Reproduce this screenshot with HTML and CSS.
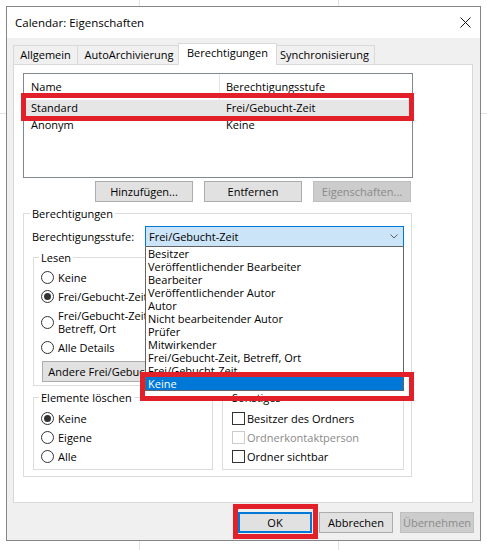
FILE: index.html
```html
<!DOCTYPE html>
<html lang="de">
<head>
  <meta charset="UTF-8">
  <title>Calendar: Eigenschaften</title>
  <link rel="stylesheet" href="styles.css">
</head>
<body>

<div class="fenster">
  <div class="titelleiste">
    <span class="titel">Calendar: Eigenschaften</span>
    <svg class="schliessen" width="11" height="11" viewBox="0 0 11 11">
      <path d="M0.5 0.5 L10.5 10.5 M10.5 0.5 L0.5 10.5" stroke="#111" stroke-width="1" fill="none"/>
    </svg>
  </div>

  <div class="inhalt">
    <!-- Reiter -->
    <div class="reiter">
      <div class="tab tab-allgemein">Allgemein</div>
      <div class="tab tab-archiv">AutoArchivierung</div>
      <div class="tab tab-rechte aktiv">Berechtigungen</div>
      <div class="tab tab-sync">Synchronisierung</div>
    </div>

    <div class="karte">
      <div class="liste">
        <div class="liste-kopf">
          <div class="spalte-name">Name</div>
          <div class="spalte-stufe">Berechtigungsstufe</div>
        </div>
        <div class="zeile markiert">
          <div class="spalte-name">Standard</div>
          <div class="spalte-stufe">Frei/Gebucht-Zeit</div>
        </div>
        <div class="zeile">
          <div class="spalte-name">Anonym</div>
          <div class="spalte-stufe">Keine</div>
        </div>
      </div>

      <div class="listen-knoepfe">
        <button class="knopf">Hinzufügen...</button>
        <button class="knopf">Entfernen</button>
        <button class="knopf" disabled>Eigenschaften...</button>
      </div>

      <fieldset class="gruppe gruppe-haupt">
        <legend>Berechtigungen</legend>

        <div class="stufe-zeile">
          <span class="stufe-label">Berechtigungsstufe:</span>
          <div class="auswahl">
            <span>Frei/Gebucht-Zeit</span>
            <svg class="pfeil" width="8" height="5" viewBox="0 0 8 5">
              <path d="M0.5 0.5 L4 4 L7.5 0.5" stroke="#606060" stroke-width="1" fill="none"/>
            </svg>
            <div class="aufklapp">
              <div class="eintrag">Besitzer</div>
              <div class="eintrag">Veröffentlichender Bearbeiter</div>
              <div class="eintrag">Bearbeiter</div>
              <div class="eintrag">Veröffentlichender Autor</div>
              <div class="eintrag">Autor</div>
              <div class="eintrag">Nicht bearbeitender Autor</div>
              <div class="eintrag">Prüfer</div>
              <div class="eintrag">Mitwirkender</div>
              <div class="eintrag">Frei/Gebucht-Zeit, Betreff, Ort</div>
              <div class="eintrag">Frei/Gebucht-Zeit</div>
              <div class="eintrag gewaehlt">Keine</div>
            </div>
          </div>
        </div>

        <div class="spalten">
          <fieldset class="gruppe gruppe-lesen">
            <legend>Lesen</legend>
            <div class="optionen">
              <div class="option"><span class="kreis"></span>Keine</div>
              <div class="option"><span class="kreis an"></span>Frei/Gebucht-Zeit</div>
              <div class="option"><span class="kreis"></span>Frei/Gebucht-Zeit,<br>Betreff, Ort</div>
              <div class="option"><span class="kreis"></span>Alle Details</div>
            </div>
            <button class="knopf knopf-andere">Andere Frei/Gebucht-Zeit...</button>
          </fieldset>

          <!-- Schreiben: liegt komplett unter der Aufklappliste -->
          <div class="gruppe-verdeckt"></div>

          <fieldset class="gruppe gruppe-links">
            <legend>Elemente löschen</legend>
            <div class="optionen">
              <div class="option"><span class="kreis an"></span>Keine</div>
              <div class="option"><span class="kreis"></span>Eigene</div>
              <div class="option"><span class="kreis"></span>Alle</div>
            </div>
          </fieldset>

          <fieldset class="gruppe gruppe-rechts">
            <legend>Sonstiges</legend>
            <div class="optionen">
              <div class="option"><span class="kasten"></span>Besitzer des Ordners</div>
              <div class="option inaktiv"><span class="kasten"></span>Ordnerkontaktperson</div>
              <div class="option"><span class="kasten"></span>Ordner sichtbar</div>
            </div>
          </fieldset>
        </div>
      </fieldset>
    </div>

    <div class="fuss">
      <button class="knopf knopf-fuss standard">OK</button>
      <button class="knopf knopf-fuss">Abbrechen</button>
      <button class="knopf knopf-fuss" disabled>Übernehmen</button>
    </div>
  </div>
</div>

<!-- rote Markierungen -->
<div class="markierung mark-standard"></div>
<div class="markierung mark-keine"></div>
<div class="markierung mark-ok"></div>

</body>
</html>
```

FILE: styles.css
```css
html {
  background: #fff;
}

body {
  margin: 0;
  padding: 6px 0 0 6px;
  position: relative;
  min-height: 550px;
  box-sizing: border-box;
  color: #000;
  font-family: 'Open Sans', 'Noto Sans', sans-serif;
  font-size: 11px;
  line-height: 13px;
  background:
    linear-gradient(#e2e2e2, #e2e2e2) 139px 0 / 1px 100% no-repeat,
    linear-gradient(#e2e2e2, #e2e2e2) 338px 0 / 1px 100% no-repeat,
    linear-gradient(#e2e2e2, #e2e2e2) 0 113px / 100% 1px no-repeat,
    #fff;
}

.fenster {
  width: 475px;
  height: 535px;
  box-sizing: border-box;
  border: 1px solid #858585;
  background-color: #f0f0f0;
  display: flex;
  flex-direction: column;
}

.titelleiste {
  height: 31px;
  box-sizing: border-box;
  flex: none;
  background-color: #fff;
  display: flex;
  align-items: center;
  justify-content: space-between;
  padding: 0 9px 0 8px;
}

.titel {
  font-size: 11.5px;
}

.inhalt {
  flex: 1;
  padding: 7px 6px 7px 6px;
  display: flex;
  flex-direction: column;
}

/* Reiter */
.reiter {
  display: flex;
  align-items: flex-end;
  height: 19px;
  flex: none;
}

.tab {
  height: 19px;
  box-sizing: border-box;
  border: 1px solid #d9d9d9;
  border-bottom: none;
  margin-left: -1px;
  text-align: center;
  line-height: 18px;
  background-color: #f0f0f0;
}

.tab-allgemein { width: 65px; margin-left: 0; }
.tab-archiv { width: 104px; }
.tab-rechte { width: 95px; }
.tab-sync { width: 101px; }

.tab.aktiv {
  width: 99px;
  height: 22px;
  margin: 0 -2px -1px -3px;
  line-height: 18px;
  padding-bottom: 3px;
  background-color: #fff;
  position: relative;
  z-index: 2;
}

.karte {
  height: 439px;
  flex: none;
  box-sizing: border-box;
  margin-right: 1px;
  background-color: #fff;
  border: 1px solid #d9d9d9;
  padding: 8px 0 0 9px;
}

/* Liste */
.liste {
  width: 390px;
  height: 105px;
  box-sizing: border-box;
  border: 1px solid #828790;
  background-color: #fff;
}

.liste-kopf {
  display: flex;
  height: 26px;
  line-height: 25px;
}

.liste-kopf .spalte-name {
  border-right: 1px solid #e5e5e5;
}

.zeile {
  display: flex;
  height: 17px;
  line-height: 16px;
}

.zeile.markiert {
  background-color: #e6e6e6;
}

.spalte-name {
  width: 196px;
  box-sizing: border-box;
  padding-left: 7px;
}

.spalte-stufe {
  flex: 1;
  padding-left: 6px;
}

/* Knoepfe */
.knopf {
  height: 21px;
  box-sizing: border-box;
  padding: 0;
  border: 1px solid #adadad;
  background-color: #e1e1e1;
  font-family: inherit;
  font-size: 11px;
  line-height: 18px;
  color: #000;
}

.knopf:disabled {
  background-color: #cccccc;
  border-color: #bfbfbf;
  color: #8a8a8a;
}

.listen-knoepfe {
  width: 390px;
  box-sizing: border-box;
  display: flex;
  justify-content: flex-end;
  gap: 11px;
  padding-right: 2px;
  margin-top: 3px;
}

.listen-knoepfe .knopf {
  width: 98px;
}

/* Gruppen */
.gruppe {
  margin: 0;
  min-width: 0;
  border: 1px solid #dcdcdc;
}

.gruppe legend {
  padding: 0 2px;
  margin-left: -2px;
  line-height: 13px;
}

.gruppe-haupt {
  width: 389px;
  box-sizing: border-box;
  margin-top: 5px;
  padding: 6px 7px 6px 8px;
}

.stufe-zeile {
  display: flex;
  align-items: center;
  height: 21px;
}

.stufe-label {
  width: 113px;
  flex: none;
}

.auswahl {
  position: relative;
  width: 259px;
  height: 21px;
  box-sizing: border-box;
  border: 1px solid #0078d7;
  background-color: #cce4f7;
  display: flex;
  align-items: center;
  padding-left: 3px;
}

.pfeil {
  margin-left: auto;
  margin-right: 5px;
}

.aufklapp {
  position: absolute;
  left: -1px;
  top: 19px;
  width: 259px;
  box-sizing: border-box;
  border: 1px solid #646464;
  background-color: #fff;
  z-index: 5;
}

.eintrag {
  height: 13px;
  line-height: 13px;
  padding-left: 2px;
  white-space: nowrap;
}

.eintrag.gewaehlt {
  background-color: #0078d7;
  color: #fff;
}

.spalten {
  display: grid;
  grid-template-columns: 180px 182px;
  column-gap: 9px;
  row-gap: 5px;
  margin-top: 4px;
  margin-left: 1px;
}

.gruppe-verdeckt {
  border: 1px solid #dcdcdc;
  margin-top: 6px;
}

.gruppe-lesen {
  padding: 7px 7px 3px 7px;
}

.gruppe-links {
  padding: 8px 7px 6px 7px;
}

.gruppe-rechts {
  padding: 8px 7px 6px 9px;
}

.optionen {
  display: flex;
  flex-direction: column;
  gap: 6px;
}

.option {
  display: flex;
  align-items: center;
  gap: 4px;
  white-space: nowrap;
}

.kreis {
  width: 13px;
  height: 13px;
  flex: none;
  box-sizing: border-box;
  border: 1px solid #333;
  border-radius: 50%;
  background-color: #fff;
  display: flex;
  align-items: center;
  justify-content: center;
}

.kreis.an::after {
  content: "";
  width: 7px;
  height: 7px;
  border-radius: 50%;
  background-color: #333;
}

.kasten {
  width: 13px;
  height: 13px;
  flex: none;
  box-sizing: border-box;
  border: 1px solid #333;
  background-color: #fff;
  margin-right: -2px;
}

.option.inaktiv {
  color: #8a8a8a;
}

.option.inaktiv .kasten {
  border-color: #cccccc;
}

.knopf-andere {
  width: 151px;
  margin: 7px 0 0 1px;
  display: block;
}

/* Fuss */
.fuss {
  display: flex;
  justify-content: flex-end;
  gap: 7px;
  margin-top: 9px;
}

.knopf-fuss {
  width: 74px;
}

.knopf.standard {
  border-color: #0078d7;
  box-shadow: inset 0 0 0 1px #0078d7;
}

/* rote Markierungen */
.markierung {
  position: absolute;
  box-sizing: border-box;
  border: 5px solid #e2202a;
  z-index: 10;
}

.mark-standard { left: 21px; top: 93px; width: 393px; height: 28px; }
.mark-keine { left: 140px; top: 372px; width: 274px; height: 29px; }
.mark-ok { left: 233px; top: 504px; width: 85px; height: 35px; }
```
